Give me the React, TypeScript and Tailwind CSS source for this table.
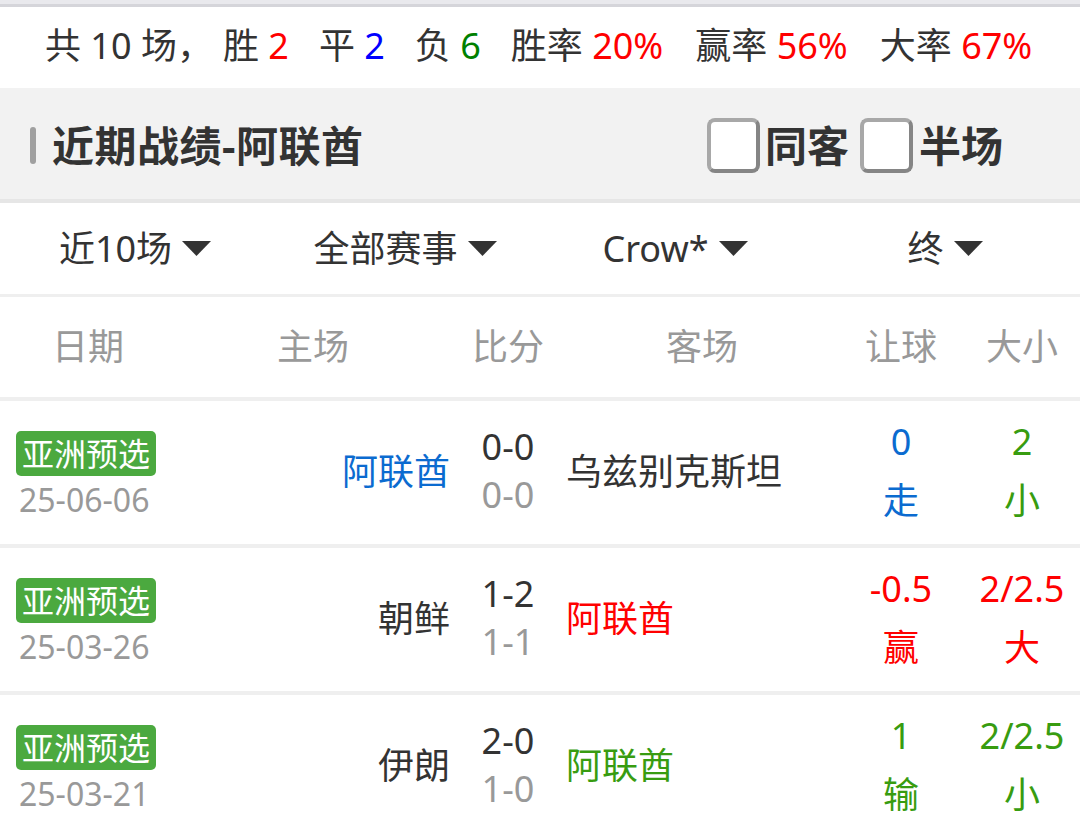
import React from 'react';

type Match = {
  league: string;
  date: string;
  home: string;
  homeColor: string;
  score: string;
  half: string;
  away: string;
  awayColor: string;
  line: string;
  lineRes: string;
  lineColor: string;
  ou: string;
  ouRes: string;
  ouColor: string;
};

const matches: Match[] = [
  {
    league: '亚洲预选',
    date: '25-06-06',
    home: '阿联酋',
    homeColor: 'text-[#0b6bd0]',
    score: '0-0',
    half: '0-0',
    away: '乌兹别克斯坦',
    awayColor: 'text-[#333333]',
    line: '0',
    lineRes: '走',
    lineColor: 'text-[#0b6bd0]',
    ou: '2',
    ouRes: '小',
    ouColor: 'text-[#389c10]',
  },
  {
    league: '亚洲预选',
    date: '25-03-26',
    home: '朝鲜',
    homeColor: 'text-[#333333]',
    score: '1-2',
    half: '1-1',
    away: '阿联酋',
    awayColor: 'text-[#ff0000]',
    line: '-0.5',
    lineRes: '赢',
    lineColor: 'text-[#ff0000]',
    ou: '2/2.5',
    ouRes: '大',
    ouColor: 'text-[#ff0000]',
  },
  {
    league: '亚洲预选',
    date: '25-03-21',
    home: '伊朗',
    homeColor: 'text-[#333333]',
    score: '2-0',
    half: '1-0',
    away: '阿联酋',
    awayColor: 'text-[#389c10]',
    line: '1',
    lineRes: '输',
    lineColor: 'text-[#389c10]',
    ou: '2/2.5',
    ouRes: '小',
    ouColor: 'text-[#389c10]',
  },
];

const Caret = () => (
  <svg width="29" height="15" viewBox="0 0 29 15">
    <path d="M0 0h29L14.5 15z" fill="#333333" />
  </svg>
);

const Checkbox = () => (
  <div className="w-[53px] h-[55px] rounded-[8px] bg-white border-[4px] border-[#a8a8a8] border-r-[#858585] border-b-[#858585]" />
);

const App: React.FC = () => {
  return (
    <div className="w-[1080px] h-[814px] overflow-hidden bg-white font-['Noto_Sans','Noto_Sans_CJK_SC',sans-serif] text-[#333333]">
      {/* top edge */}
      <div className="h-[4px] bg-[#e9e9ed]" />
      <div className="h-[3px] bg-[#d5d5da]" />

      {/* summary */}
      <div className="h-[81px] flex items-center pl-[45px] pb-[4px] text-[36px] whitespace-nowrap">
        <span>共 10 场，</span>
        <span className="ml-[10px]">
          胜 <span className="text-[#ff0000]">2</span>
        </span>
        <span className="ml-[30px]">
          平 <span className="text-[#0000ff]">2</span>
        </span>
        <span className="ml-[30px]">
          负 <span className="text-[#008000]">6</span>
        </span>
        <span className="ml-[30px]">
          胜率 <span className="text-[#ff0000]">20%</span>
        </span>
        <span className="ml-[32px]">
          赢率 <span className="text-[#ff0000]">56%</span>
        </span>
        <span className="ml-[32px]">
          大率 <span className="text-[#ff0000]">67%</span>
        </span>
      </div>

      {/* section header */}
      <div className="h-[115px] bg-[#f2f2f2] border-b-4 border-[#e6e6e6] flex items-center pt-[4px] pl-[30px] pr-[77px]">
        <div className="w-[6px] h-[37px] rounded-full bg-[#a0a0a0]" />
        <div className="ml-[16px] text-[42px] font-bold tracking-[0.5px]">近期战绩-阿联酋</div>
        <div className="ml-auto flex items-center">
          <Checkbox />
          <span className="ml-[5px] text-[42px] font-bold">同客</span>
          <div className="ml-[11px]">
            <Checkbox />
          </div>
          <span className="ml-[6px] text-[42px] font-bold">半场</span>
        </div>
      </div>

      {/* filters */}
      <div className="h-[94px] border-b-[3px] border-[#efefef] grid grid-cols-4 text-[36px]">
        {['近10场', '全部赛事', 'Crow*', '终'].map((f) => (
          <div key={f} className="flex items-center justify-center gap-[10px]">
            <span>{f}</span>
            <Caret />
          </div>
        ))}
      </div>

      {/* table head */}
      <div className="h-[104px] border-b-4 border-[#efefef] grid grid-cols-[176px_274px_116px_272px_126px_116px] text-[36px] text-[#999999]">
        {['日期', '主场', '比分', '客场', '让球', '大小'].map((h) => (
          <div key={h} className="flex items-center justify-center">
            {h}
          </div>
        ))}
      </div>

      {/* rows */}
      {matches.map((m, i) => (
        <div
          key={i}
          className="h-[147px] border-b-4 border-[#efefef] grid grid-cols-[176px_274px_116px_272px_126px_116px]"
        >
          <div className="flex flex-col items-start pl-4 pt-[30px]">
            <span className="h-[45px] px-[6px] rounded-[5px] bg-[#4ba93f] text-white text-[32px] leading-[45px]">
              {m.league}
            </span>
            <span className="mt-[4px] pl-[3px] text-[32px] leading-[40px] text-[#999999]">{m.date}</span>
          </div>
          <div className={`flex items-center justify-end pb-[2px] text-[36px] ${m.homeColor}`}>{m.home}</div>
          <div className="flex flex-col items-center justify-center pb-[4px] text-[36px] leading-[48px]">
            <span className="text-[#333333]">{m.score}</span>
            <span className="text-[#999999]">{m.half}</span>
          </div>
          <div className={`flex items-center pb-[2px] text-[36px] ${m.awayColor}`}>{m.away}</div>
          <div className={`flex flex-col items-center justify-center pb-[4px] text-[36px] leading-[59px] ${m.lineColor}`}>
            <span>{m.line}</span>
            <span>{m.lineRes}</span>
          </div>
          <div className={`flex flex-col items-center justify-center pb-[4px] text-[36px] leading-[59px] ${m.ouColor}`}>
            <span>{m.ou}</span>
            <span>{m.ouRes}</span>
          </div>
        </div>
      ))}
    </div>
  );
};

export default App;
